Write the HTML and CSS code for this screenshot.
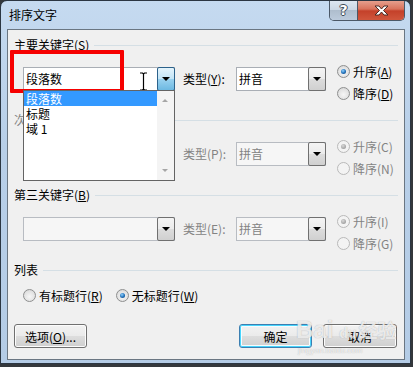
FILE: index.html
```html
<!DOCTYPE html>
<html lang="zh-CN">
  <head>
    <meta charset="UTF-8" />
    <meta name="viewport" content="width=device-width, initial-scale=1.0" />
    <title>排序文字</title>
    <link rel="stylesheet" href="styles.css">
  </head>
  <body>
    <div class="window">
      <div class="titlebar">
        <span class="title">排序文字</span>
        <div class="caption">
          <div class="cap-help">?</div>
          <div class="cap-close">
            <svg width="17" height="11" viewBox="0 0 17 11">
              <path d="M2 1h4l2.5 3 2.5-3h4l-4.5 4.5 4.5 4.5h-4l-2.5-3-2.5 3h-4l4.5-4.5z" fill="#fff" stroke="#4a2a24" stroke-width="1"/>
            </svg>
          </div>
        </div>
      </div>

      <div class="client">
        <!-- 主要关键字 -->
        <div class="group">
          <div class="group-head"><span>主要关键字(<u>S</u>)</span></div>
          <div class="key-row">
            <div class="combo combo-key">
              <span class="combo-text">段落数</span>
              <span class="drop pressed"></span>
              <ul class="droplist">
                <li class="selected">段落数</li>
                <li>标题</li>
                <li>域 1</li>
                <span class="list-scroll"><i class="up"></i><i class="down"></i></span>
              </ul>
            </div>
            <span class="type-label">类型(<u>Y</u>):</span>
            <div class="combo combo-type">
              <span class="combo-text">拼音</span>
              <span class="drop"></span>
            </div>
            <div class="order">
              <label class="radio"><span class="dot checked"></span><span>升序(<u>A</u>)</span></label>
              <label class="radio"><span class="dot"></span><span>降序(<u>D</u>)</span></label>
            </div>
          </div>
        </div>

        <!-- 次要关键字 -->
        <div class="group disabled">
          <div class="group-head"><span>次要关键字(T)</span></div>
          <div class="key-row">
            <div class="combo combo-key">
              <span class="combo-text"></span>
              <span class="drop"></span>
            </div>
            <span class="type-label">类型(P):</span>
            <div class="combo combo-type">
              <span class="combo-text">拼音</span>
              <span class="drop"></span>
            </div>
            <div class="order">
              <label class="radio"><span class="dot checked"></span><span>升序(C)</span></label>
              <label class="radio"><span class="dot"></span><span>降序(N)</span></label>
            </div>
          </div>
        </div>

        <!-- 第三关键字 -->
        <div class="group disabled">
          <div class="group-head"><span class="enabled">第三关键字(<u>B</u>)</span></div>
          <div class="key-row">
            <div class="combo combo-key">
              <span class="combo-text"></span>
              <span class="drop"></span>
            </div>
            <span class="type-label">类型(E):</span>
            <div class="combo combo-type">
              <span class="combo-text">拼音</span>
              <span class="drop"></span>
            </div>
            <div class="order">
              <label class="radio"><span class="dot checked"></span><span>升序(I)</span></label>
              <label class="radio"><span class="dot"></span><span>降序(G)</span></label>
            </div>
          </div>
        </div>

        <!-- 列表 -->
        <div class="list-group">
          <div class="group-head"><span>列表</span></div>
          <div class="list-row">
            <label class="radio first"><span class="dot"></span><span>有标题行(<u>R</u>)</span></label>
            <label class="radio"><span class="dot checked"></span><span>无标题行(<u>W</u>)</span></label>
          </div>
        </div>

        <div class="buttons">
          <button class="btn">选项(<u>O</u>)...</button>
          <button class="btn default ok">确定</button>
          <button class="btn cancel">取消</button>
        </div>
      </div>

      <div class="highlight"></div>
      <svg class="ibeam" width="9" height="19" viewBox="0 0 9 19">
        <path d="M1 1h2.5l1 1 1-1H8M4.5 2v15M1 18h2.5l1-1 1 1H8" fill="none" stroke="#000" stroke-width="1.2"/>
      </svg>

      <div class="watermark">
        <div class="wm-logo"><span>Bai</span><span class="wm-du">du</span><span>经验</span></div>
        <div class="wm-url">jingyan.baidu.com</div>
      </div>
    </div>
  </body>
</html>
```

FILE: styles.css
```css
body {
  margin: 0;
  background: #34383c;
  font-family: "Noto Sans CJK SC", "Liberation Sans", sans-serif;
  font-size: 12px;
  color: #000;
}
.window {
  position: relative;
  width: 411px;
  height: 364px;
  box-sizing: border-box;
  border: 1px solid #2b3642;
  border-radius: 7px 7px 0 0;
  background: linear-gradient(180deg, #c5daf0 0%, #b8cfe8 40%, #b4cce6 100%);
  overflow: hidden;
}
.titlebar {
  display: flex;
  align-items: center;
  height: 28px;
  padding-left: 8px;
}
.title {
  line-height: 16px;
}
.caption {
  display: flex;
  align-self: flex-start;
  margin: -1px 5px 0 auto;
  height: 20px;
  border: 1px solid #4b5867;
  border-top: none;
  border-radius: 0 0 5px 5px;
  overflow: hidden;
}
.cap-help {
  width: 27px;
  display: flex;
  align-items: center;
  justify-content: center;
  border-right: 1px solid #4b5867;
  background: linear-gradient(180deg, #dfe8f2 0%, #cbd7e4 50%, #aebdcd 51%, #bccbdc 100%);
  font-family: "DejaVu Sans", sans-serif;
  font-weight: bold;
  font-size: 14px;
  color: #fff;
  text-shadow: -1px 0 #3e4a56, 1px 0 #3e4a56, 0 -1px #3e4a56, 0 1px #3e4a56;
}
.cap-close {
  width: 46px;
  display: flex;
  align-items: center;
  justify-content: center;
  background: linear-gradient(180deg, #e8a493 0%, #d9735c 45%, #c4412a 55%, #d0563c 100%);
}

.client {
  height: 331px;
  margin: 0 5px 0 6px;
  box-sizing: border-box;
  border: 1px solid #6a7682;
  background: #f0f0f0;
  padding-top: 7px;
}

.group {
  height: 75px;
  padding: 0 6px;
}
.group-head {
  display: flex;
  align-items: center;
  height: 16px;
  line-height: 16px;
}
.group-head::after {
  content: "";
  flex: 1;
  height: 1px;
  margin-left: 5px;
  background: #d5dfe5;
}
.key-row {
  display: flex;
  align-items: flex-start;
  margin-top: 14px;
  padding-left: 9px;
}

.combo {
  position: relative;
  display: flex;
  height: 24px;
  box-sizing: border-box;
  border: 1px solid #a9aeb5;
  background: #fff;
}
.combo-key {
  width: 152px;
}
.combo-type {
  width: 90px;
}
.combo-text {
  flex: 1;
  padding-left: 2px;
  line-height: 22px;
}
.drop {
  position: relative;
  width: 18px;
  margin: -1px -1px -1px 0;
  box-sizing: border-box;
  border: 1px solid #707070;
  border-radius: 2px;
  background: linear-gradient(180deg, #f4f4f4 0%, #ebebeb 48%, #dcdcdc 52%, #d0d0d0 100%);
}
.drop::after {
  content: "";
  position: absolute;
  left: 4px;
  top: 9px;
  border-top: 4px solid #000;
  border-left: 4px solid transparent;
  border-right: 4px solid transparent;
}
.drop.pressed {
  border-color: #2c628b;
  background: linear-gradient(180deg, #e5f4fc 0%, #c4e5f6 48%, #98d1ef 52%, #6db9e2 100%);
}
.type-label {
  width: 53px;
  margin-left: 8px;
  line-height: 24px;
}
.order {
  margin-left: 11px;
  margin-top: -7px;
}
.radio {
  display: flex;
  align-items: center;
  gap: 3px;
  height: 22px;
  white-space: nowrap;
}
.dot {
  position: relative;
  width: 13px;
  height: 13px;
  box-sizing: border-box;
  border: 1px solid #8e8f8f;
  border-radius: 50%;
  background: radial-gradient(circle at 50% 60%, #f6f6f6 0%, #e2e2e2 60%, #cfcfcf 100%);
}
.dot.checked::after {
  content: "";
  position: absolute;
  left: 3px;
  top: 3px;
  width: 5px;
  height: 5px;
  border-radius: 50%;
  background: radial-gradient(circle at 40% 35%, #8fd1ff 0%, #1f6fb8 55%, #173f70 100%);
}

.disabled .group-head,
.disabled .type-label,
.disabled .radio,
.disabled .combo-text {
  color: #838383;
}
.disabled .group-head .enabled {
  color: #000;
}
.disabled .combo {
  border-color: #b8bcc2;
  background: #f6f6f6;
}
.disabled .dot {
  border-color: #b9b9b9;
  background: #f3f3f3;
}
.disabled .dot.checked::after {
  background: radial-gradient(circle at 40% 35%, #d8d8d8 0%, #a2a2a2 70%);
}

.droplist {
  position: absolute;
  left: -1px;
  top: 22px;
  width: 152px;
  height: 91px;
  box-sizing: border-box;
  margin: 0;
  padding: 0 17px 0 0;
  list-style: none;
  border: 1px solid #646464;
  background: #fff;
  z-index: 2;
}
.droplist li {
  height: 15px;
  line-height: 15px;
  padding-left: 2px;
}
.droplist li.selected {
  background: #3399ff;
  color: #fff;
}
.list-scroll {
  position: absolute;
  top: 0;
  right: 0;
  bottom: 0;
  width: 17px;
  background: #f4f4f4;
}
.list-scroll i {
  position: absolute;
  left: 5px;
  border-left: 3px solid transparent;
  border-right: 3px solid transparent;
}
.list-scroll .up {
  top: 8px;
  border-bottom: 3px solid #a6a6a6;
}
.list-scroll .down {
  bottom: 8px;
  border-top: 3px solid #a6a6a6;
}

.list-group {
  padding: 0 6px;
}
.list-row {
  display: flex;
  align-items: center;
  height: 18px;
  margin-top: 8px;
  padding-left: 9px;
}
.list-row .first {
  margin-right: 13px;
}

.buttons {
  display: flex;
  margin-top: 20px;
  padding: 0 7px 0 6px;
}
.btn {
  width: 73px;
  height: 24px;
  padding: 0;
  font: inherit;
  color: #000;
  border: 1px solid #707070;
  border-radius: 3px;
  background: linear-gradient(180deg, #f2f2f2 0%, #ebebeb 48%, #dddddd 52%, #cfcfcf 100%);
  box-shadow: inset 0 0 0 1px #fcfcfc;
}
.btn.default {
  border-color: #3c7fb1;
  box-shadow: inset 0 0 0 1px #48d5fd, inset 0 0 0 2px #f6fcfe;
}
.ok {
  margin-left: auto;
}
.cancel {
  width: 74px;
  margin-left: 11px;
}

.highlight {
  position: absolute;
  left: 9px;
  top: 49px;
  width: 114px;
  height: 43px;
  box-sizing: border-box;
  border: 4px solid #f60000;
  border-radius: 1px;
}
.ibeam {
  position: absolute;
  left: 138px;
  top: 71px;
}

.watermark {
  position: absolute;
  left: 295px;
  top: 315px;
  color: rgba(255, 255, 255, 0.75);
  text-shadow: 0 0 1px rgba(120, 120, 120, 0.6);
}
.wm-logo {
  display: flex;
  align-items: baseline;
  font-family: "Liberation Sans", sans-serif;
  font-weight: bold;
  font-size: 24px;
  line-height: 28px;
}
.wm-logo span:last-child {
  font-family: "Noto Sans CJK SC", sans-serif;
  font-size: 19px;
  margin-left: 2px;
}
.wm-du {
  font-size: 14px;
  margin-left: 6px;
}
.wm-url {
  font-family: "Liberation Sans", sans-serif;
  font-size: 8px;
  line-height: 8px;
  margin-left: 2px;
  color: rgba(255, 255, 255, 0.8);
}
```
